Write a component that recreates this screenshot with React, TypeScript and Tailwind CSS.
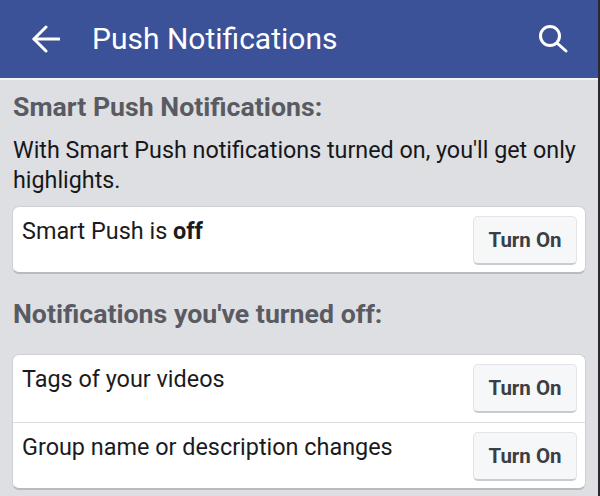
function TurnOn() {
  return (
    <button className="h-[49px] w-[104px] shrink-0 rounded-[5px] border border-[#e3e4e8] border-b-2 border-b-[#c9cbd1] bg-[#f6f7f9] text-[20.5px] font-bold text-[#3c3e45]">
      Turn On
    </button>
  );
}

function Row({ children, className }: { children: React.ReactNode; className: string }) {
  return (
    <div className={`flex items-start justify-between pl-[9px] pr-[8px] ${className}`}>
      <span className="pt-[8px] text-[23.4px] leading-[32px] text-[#1b1b1d]">{children}</span>
      <div className="pt-[9px]">
        <TurnOn />
      </div>
    </div>
  );
}

export default function App() {
  return (
    <div className="h-[496px] w-[600px] overflow-hidden border-r-2 border-[#2a2a2e] bg-[#dddfe3] font-['Roboto',sans-serif]">
      <header className="flex h-[80px] items-center justify-between border-b-2 border-[#f1f2f5] bg-[#3b5298] pl-[31px] pr-[30px] text-white">
        <div className="flex items-center gap-[32px]">
          <svg width="29" height="28" viewBox="0 0 29 28" fill="none" stroke="currentColor" strokeWidth="3" strokeLinecap="round" strokeLinejoin="round">
            <path d="M15 2 3 14l12 12" />
            <path d="M3 14h25" />
          </svg>
          <span className="text-[30px] leading-none">Push Notifications</span>
        </div>
        <svg width="30" height="30" viewBox="0 0 30 30" fill="none" stroke="currentColor" strokeWidth="3" strokeLinecap="round">
          <circle cx="12" cy="12" r="9.5" />
          <path d="m19 19 9 8" />
        </svg>
      </header>

      <main className="px-[13px]">
        <h2 className="pt-[11px] text-[26.7px] font-bold leading-[32px] text-[#5a5b62]">Smart Push Notifications:</h2>
        <p className="mt-[12px] text-[23.3px] leading-[30px] text-[#17171a]">
          With Smart Push notifications turned on, you'll get only highlights.
        </p>
        <div className="-ml-px mt-[11px] w-[574px] rounded-[7px] border border-[#cfd0d5] border-b-2 border-b-[#b9bbc1] bg-white">
          <Row className="h-[65px]">
            Smart Push is <b>off</b>
          </Row>
        </div>
        <h2 className="mt-[24px] text-[26.7px] font-bold leading-[32px] text-[#5a5b62]">Notifications you've turned off:</h2>
        <div className="-ml-px mt-[24px] w-[574px] rounded-[7px] border border-[#cfd0d5] border-b-2 border-b-[#b9bbc1] bg-white">
          <Row className="h-[67px]">Tags of your videos</Row>
          <Row className="h-[66px] border-t border-[#dcdde1]">Group name or description changes</Row>
        </div>
      </main>
    </div>
  );
}
